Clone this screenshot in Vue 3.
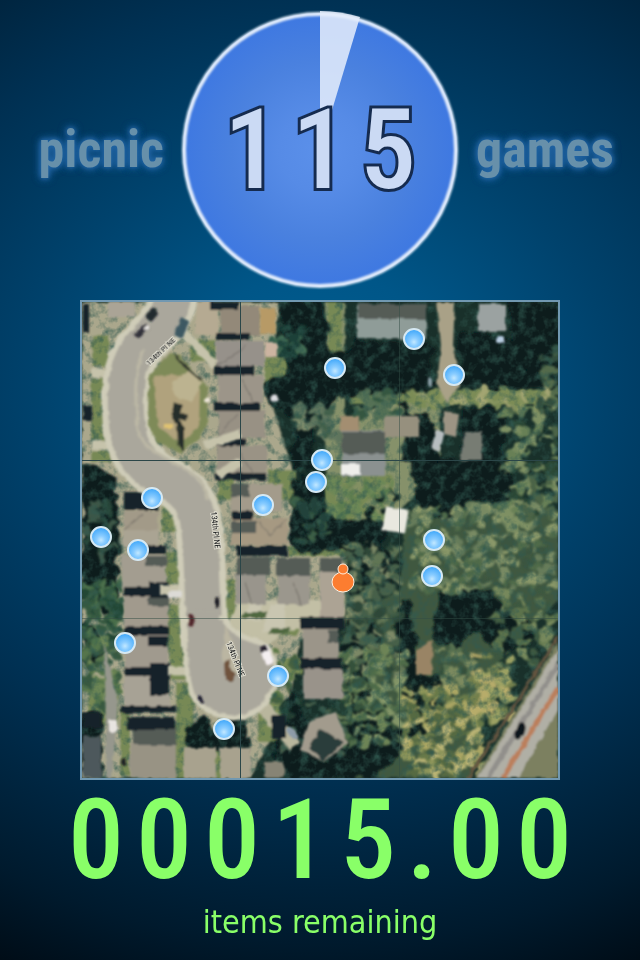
<script setup>
const time = '115'
const score = '00015.00'

const pins = [
  [414, 339], [335, 368], [454, 375], [322, 460], [316, 482], [152, 498], [263, 505],
  [101, 537], [138, 550], [434, 540], [432, 576], [125, 643], [278, 676], [224, 729],
]

// x, y, width, height, roof colour
const houses = [
  [108, 302, 27, 15, '#aaa496'], [195, 302, 23, 33, '#b5aa92'], [220, 306, 40, 29, '#938979'],
  [216, 341, 48, 25, '#96918a'], [218, 375, 45, 29, '#9c9589'], [218, 411, 47, 27, '#989184'],
  [217, 446, 50, 29, '#9a9385'], [231, 484, 51, 28, '#a39b8b'], [231, 518, 57, 27, '#a69982'],
  [124, 511, 34, 20, '#a29a88'], [123, 530, 36, 17, '#aaa493'], [122, 555, 44, 33, '#a39d90'],
  [124, 595, 44, 31, '#a19a8d'], [125, 634, 43, 34, '#a09a8e'], [124, 676, 46, 31, '#a7a295'],
  [130, 744, 46, 34, '#989384'], [83, 736, 18, 42, '#4d595b'],
  [236, 574, 30, 30, '#99958c'], [278, 574, 32, 31, '#9b978d'], [320, 562, 24, 55, '#aca394'],
  [303, 629, 36, 30, '#9b9589'], [303, 669, 40, 30, '#99938a'],
  [184, 748, 32, 30, '#a8a28e'], [220, 748, 31, 30, '#a8a28e'], [264, 762, 20, 16, '#878474'],
  [357, 306, 69, 33, '#8f9c98'], [342, 431, 43, 45, '#8b9190'], [478, 304, 28, 27, '#9ba2a1'],
  [340, 416, 19, 15, '#a38e71'], [384, 416, 35, 22, '#96907e'],
]

// shaded roof planes and the gaps between houses
const shades = [
  [210, 302, 29, 8], [216, 333, 34, 7], [214, 366, 40, 9], [214, 403, 46, 8], [216, 438, 30, 8],
  [214, 473, 52, 7], [232, 511, 20, 9], [236, 546, 52, 10], [124, 492, 34, 18], [130, 546, 36, 8],
  [124, 587, 46, 9], [149, 582, 20, 16], [124, 626, 45, 9], [148, 636, 20, 10], [125, 667, 32, 9],
  [150, 663, 20, 32], [120, 706, 56, 7], [127, 717, 48, 13], [83, 713, 18, 15],
  [83, 304, 6, 29], [83, 406, 9, 14], [300, 617, 45, 12], [300, 658, 42, 11], [272, 715, 14, 24],
]

const darkRoofs = [
  [133, 728, 43, 17], [237, 557, 33, 18], [277, 558, 33, 18], [320, 558, 22, 14],
  [145, 556, 22, 10], [148, 597, 20, 9], [231, 484, 18, 13], [231, 521, 25, 12],
  [342, 432, 43, 22], [328, 630, 11, 13], [358, 304, 68, 15],
]

const lawns = [
  [92, 335, 17, 31], [91, 378, 14, 62], [91, 450, 20, 12], [162, 500, 17, 32], [165, 552, 17, 32],
  [166, 604, 17, 50], [170, 650, 19, 30], [176, 682, 18, 70], [88, 680, 30, 45], [120, 710, 10, 66],
  [165, 724, 20, 54], [190, 340, 26, 22], [264, 356, 23, 30], [218, 470, 16, 30], [222, 580, 14, 40],
  [250, 606, 40, 10], [272, 624, 26, 12], [268, 470, 28, 30], [325, 475, 68, 48], [288, 546, 65, 10],
  [350, 390, 205, 14], [328, 302, 14, 52], [282, 658, 20, 16], [212, 740, 9, 38], [258, 702, 30, 40],
]

const shadows = [
  'M278 302H322L330 352L350 350L358 333L365 343H432V395H340L330 410L315 405L312 475L292 466L297 420L272 405L262 386L290 370Z',
  'M459 333L480 332L520 342L558 350V388H459Z', 'M507 302H558V380L520 370Z',
  'M82 462L116 475L120 550L114 620L82 595Z',
  'M294 478L320 482L325 515L385 523L380 552H298L290 538Z',
  'M370 504L379 496L392 488L400 500L380 545L403 560L390 590L356 610L342 560Z',
  'M411 460L512 460L510 505L470 500L458 522L430 518L415 508Z',
  'M438 592L462 586L490 590L505 612L520 612L533 625L530 645L500 655L478 632L455 648L433 640Z',
  'M400 606L410 600L415 650L428 676L460 670L452 700L432 710L430 735L410 735L402 696L394 640Z',
  'M350 612L378 626L382 650L365 690L390 710L410 745L375 778H300L345 738L342 640Z',
  'M186 728L205 713L220 738L229 718L244 713L250 745L244 756L215 752L185 758Z',
  'M278 722L292 684L310 730L335 778H286L274 755Z',
  'M400 400L412 414L430 416L440 460L405 461Z', 'M462 410L486 405L505 410L502 460H465Z',
  'M82 620L98 630L102 665L85 670Z', 'M82 770L82 713H103V778Z',
]

function makeRandom(seed) {
  let s = seed
  return () => {
    s = (s * 16807) % 2147483647
    return s / 2147483647
  }
}

// x, y, width, height, leaf clumps, palette
const groves = [
  [412, 505, 145, 85, 260, ['#667b5a', '#788a63', '#4f6a4a', '#8a9869', '#3a543f']],
  [505, 395, 52, 130, 100, ['#4b6446', '#688057', '#2b4635', '#7e9064']],
  [496, 590, 55, 75, 60, ['#5c724c', '#3e5840', '#76885b']],
  [345, 545, 55, 130, 120, ['#607454', '#47604a', '#7c8866', '#2d4737']],
  [340, 650, 66, 95, 130, ['#6d8457', '#4f6c49', '#839568', '#35513a']],
  [438, 648, 45, 58, 60, ['#567050', '#7c8a5e', '#35503b']],
  [404, 690, 78, 86, 170, ['#aaa664', '#8d955a', '#bab475', '#68794a', '#566b43']],
  [472, 655, 38, 65, 70, ['#b7ac6b', '#9ba163', '#73804d']],
  [84, 580, 38, 60, 75, ['#345940', '#4b704b', '#244735']],
  [84, 640, 35, 65, 60, ['#55744b', '#6d8655', '#375840']],
  [84, 502, 32, 60, 20, ['#274439', '#3c5747']],
  [272, 325, 28, 30, 25, ['#315a48', '#456e54', '#1c3f37']],
  [296, 408, 42, 30, 34, ['#5e745d', '#42604c', '#7e8c6c']],
  [355, 390, 45, 28, 34, ['#365641', '#547155']],
  [330, 480, 64, 38, 60, ['#6c8757', '#839064', '#5b7b4f']],
  [295, 500, 30, 42, 20, ['#22433a', '#3c5f45']],
  [410, 392, 145, 14, 60, ['#8b9762', '#7b8c57', '#a3a572']],
  [540, 350, 18, 55, 16, ['#324e3c', '#536b4b']],
  [260, 635, 40, 65, 16, ['#44613f', '#5d7949']],
  [280, 700, 65, 60, 24, ['#203d33', '#445d49']],
]

const random = makeRandom(4127)
const leaves = groves.flatMap(([x, y, w, h, n, colours]) =>
  Array.from({ length: n }, () => ({
    x: Math.round(x + random() * w),
    y: Math.round(y + random() * h),
    rx: 3 + Math.round(random() * 4),
    ry: 2 + Math.round(random() * 4),
    fill: colours[Math.floor(random() * colours.length)],
  })),
)

const cars = [
  [142, 331, 16, 7, -40, '#33323b'], [147, 328, 6, 4, -40, '#e9e6e2'], [182, 328, 18, 9, -65, '#3c5962'],
  [152, 315, 12, 8, -50, '#222a2e'], [217, 603, 10, 4, 90, '#15171d'], [191, 620, 13, 5, 90, '#4d2427'],
  [267, 655, 20, 8, 70, '#f4eff1'], [264, 649, 7, 7, 70, '#26232d'], [201, 700, 8, 4, 50, '#17162a'],
  [113, 726, 12, 8, 90, '#e8e4e0'], [124, 762, 8, 5, 90, '#151b20'], [175, 594, 14, 7, 0, '#dcdad6'],
  [438, 440, 20, 9, -75, '#b7bdc0'], [430, 382, 10, 4, 90, '#899da5'], [207, 400, 6, 5, 0, '#ede5d8'],
  [274, 398, 7, 7, 0, '#dedde1'], [292, 733, 14, 5, 45, '#8d9ba8'], [500, 339, 8, 8, 0, '#b8cce0'],
]
</script>

<template>
  <main class="game">
    <header class="top">
      <span class="brand">picnic</span>
      <div class="timer" role="timer">
        <svg class="dial" viewBox="0 0 280 280" aria-hidden="true">
          <defs>
            <radialGradient id="dial-fill">
              <stop offset="0" stop-color="#5b90ea" />
              <stop offset="0.3" stop-color="#568be6" />
              <stop offset="0.65" stop-color="#4a81df" />
              <stop offset="1" stop-color="#3e78e1" />
            </radialGradient>
            <filter id="soft-ring"><feGaussianBlur stdDeviation="1" /></filter>
          </defs>
          <circle cx="140" cy="140" r="137" fill="url(#dial-fill)" />
          <circle cx="140" cy="140" r="136" fill="none" stroke="#e4eefb" stroke-width="4" filter="url(#soft-ring)" />
          <path d="M140 140V1A139 139 0 0 1 180 7Z" fill="#e5eefb" fill-opacity="0.86" />
        </svg>
        <span class="digits time"><span v-for="(c, i) in time" :key="i" class="digit">{{ c }}</span></span>
      </div>
      <span class="brand">games</span>
    </header>

    <section class="map" aria-label="Map">
      <svg class="aerial" viewBox="82 302 476 476" preserveAspectRatio="xMidYMid slice">
        <defs>
          <radialGradient id="pin" cx="0.5" cy="0.65" r="0.6">
            <stop offset="0" stop-color="#c2e8ff" />
            <stop offset="0.35" stop-color="#89ccff" />
            <stop offset="1" stop-color="#43a9fa" />
          </radialGradient>
          <filter id="ragged" x="-5%" y="-5%" width="110%" height="110%">
            <feTurbulence type="fractalNoise" baseFrequency="0.09" numOctaves="2" seed="6" />
            <feDisplacementMap in="SourceGraphic" scale="14" xChannelSelector="R" yChannelSelector="G" />
            <feGaussianBlur stdDeviation="1.2" />
          </filter>
          <filter id="rough" x="-2%" y="-2%" width="104%" height="104%">
            <feTurbulence type="fractalNoise" baseFrequency="0.12" numOctaves="2" seed="3" />
            <feDisplacementMap in="SourceGraphic" scale="4" xChannelSelector="R" yChannelSelector="G" />
            <feGaussianBlur stdDeviation="0.9" />
          </filter>
          <filter id="grain" x="0" y="0" width="100%" height="100%">
            <feTurbulence type="fractalNoise" baseFrequency="0.11" numOctaves="3" seed="9" />
            <feColorMatrix values="0 0 0 0 0.03  0 0 0 0 0.1  0 0 0 0 0.08  1.8 0 0 0 -0.8" />
          </filter>
        </defs>

        <rect x="82" y="302" width="476" height="476" fill="#19302a" />
        <g filter="url(#rough)">
          <path d="M82 302H280L268 390L296 480L292 545L350 556L345 620L300 640L290 700L250 778H82Z" fill="#aaa78c" />
          <path d="M325 302H345V420L395 400H440V470L400 510L330 525L325 440Z" fill="#86916b" />
          <path d="M405 510H558V600L500 660L470 778H350L345 620L400 590Z" fill="#41593f" />
          <rect v-for="(l, i) in lawns" :key="i" :x="l[0]" :y="l[1]" :width="l[2]" :height="l[3]" fill="#778954" />
        </g>

        <g filter="url(#ragged)">
          <path v-for="(d, i) in shadows" :key="i" :d="d" fill="#071a1e" />
        </g>
        <g filter="url(#ragged)">
          <ellipse v-for="(l, i) in leaves" :key="i" :cx="l.x" :cy="l.y" :rx="l.rx" :ry="l.ry" :fill="l.fill" />
        </g>
        <rect x="82" y="302" width="476" height="476" filter="url(#grain)" />

        <g filter="url(#rough)">
          <path d="M437 302H455L453 345L460 385L447 402L437 385L441 345Z" fill="#a9a187" />
          <path d="M444 412L459 414L456 437L444 434Z" fill="#9d9484" />
          <path d="M465 432H482V460H460Z" fill="#777c73" />
          <path d="M104 641L118 702L112 778H106V720Z" fill="#96978d" />
          <path d="M416 650L433 640L432 675H416Z" fill="#998465" />
          <path d="M240 600H345L320 625L285 632L262 650L222 634Z" fill="#c2bfa5" />
          <path d="M262 695L300 742L290 750L256 710Z" fill="#b9b69d" />
          <rect v-for="(h, i) in houses" :key="i" :x="h[0]" :y="h[1]" :width="h[2]" :height="h[3]" :fill="h[4]" />
          <rect v-for="(h, i) in darkRoofs" :key="i" :x="h[0]" :y="h[1]" :width="h[2]" :height="h[3]" fill="#555b56" />
          <rect v-for="(s, i) in shades" :key="i" :x="s[0]" :y="s[1]" :width="s[2]" :height="s[3]" fill="#14242a" />
          <path d="M245 345L240 352L216 366M242 379L254 403M238 414L217 438M240 453L253 474M258 521L270 535L287 519M245 582L252 604M294 582L301 605M142 515L124 530" fill="none" stroke="#6e6b63" />
          <path d="M310 720L336 712L348 743L324 762L300 750Z" fill="#a29b8d" />
          <path d="M320 729L344 742L323 762L309 748Z" fill="#2c3c3b" />
          <path d="M250 604H262V620H242ZM270 604H285V632H262Z" fill="#c9c6b1" />
          <path d="M244 612H266V618H240ZM272 628H292L286 634H268Z" fill="#4f6840" />
        </g>

        <g fill="none" filter="url(#rough)">
          <path d="M181 330L215 365M92 373H112M92 445H116M160 590H190M168 671H195M205 445L240 434M218 475L240 462" stroke="#c6c3ab" stroke-width="9" />
          <path d="M173 296C168 338 128 335 126 390C124 446 134 462 165 480C195 494 199 512 201 550L205 645" stroke="#cfccb8" stroke-width="48" />
          <path d="M173 296C168 338 128 335 126 390C124 446 134 462 165 480C195 494 199 512 201 550L205 645" stroke="#aaa79c" stroke-width="36" />
          <path d="M144 350C132 372 136 405 138 430C145 462 205 462 208 500" stroke="#bbb7a5" stroke-width="3" />
        </g>
        <g filter="url(#rough)">
          <path d="M184 620L223 618Q234 637 262 643Q282 659 274 686Q263 717 233 718Q207 716 193 696Q185 679 184 620Z" fill="#aaa79c" stroke="#cfccb8" stroke-width="5" />
          <rect x="188" y="610" width="31" height="24" fill="#aaa79c" />
          <path d="M225 640Q220 655 226 674H240Q240 652 225 625Z" fill="#bbb6a2" />
          <path d="M224 663L229 660L231 670L237 674L232 682L225 679Z" fill="#70533d" />
          <path d="M149 375L170 354L180 356L208 388L207 425L197 440L181 453L157 443L148 425Z" fill="#7e8a59" />
          <path d="M153 376L190 374L200 384L199 428L180 443L158 426Z" fill="#b0a27d" />
          <path d="M172 382L190 370L202 383L192 402L174 396Z" fill="#bcb390" />
          <path d="M174 402L183 405L180 412L188 414L187 421L180 419L184 430L184 452L177 445L176 424L171 418Z" fill="#252f2a" />
          <path d="M173 353L203 381L198 379L180 364Z" fill="#30362f" />
          <path d="M165 424H173V428H165Z" fill="#dfc372" />
          <rect x="384" y="508" width="23" height="24" fill="#e9e8df" transform="rotate(9 396 520)" />
          <rect x="341" y="463" width="20" height="12" fill="#eeeeea" />
          <path d="M260 308H276V334H260Z" fill="#b79a66" />
          <path d="M265 342H277V357H265Z" fill="#ccb4a1" />
        </g>

        <g filter="url(#rough)">
          <path d="M558 642L475 778H558Z" fill="#7c8060" />
          <path d="M558 649L478 778H518L558 709Z" fill="#b0afa5" />
          <path d="M558 664L488 778" stroke="#918f8b" stroke-width="5" />
          <path d="M558 688L503 778" stroke="#bb7f5c" stroke-width="5" />
          <path d="M558 637L503 724L468 778" fill="none" stroke="#655541" stroke-width="3" />
          <ellipse cx="520" cy="731" rx="5" ry="9" fill="#11151d" transform="rotate(20 520 731)" />
        </g>

        <g filter="url(#rough)">
          <rect
            v-for="(c, i) in cars"
            :key="i"
            :x="c[0] - c[2] / 2"
            :y="c[1] - c[3] / 2"
            :width="c[2]"
            :height="c[3]"
            rx="2"
            :fill="c[5]"
            :transform="`rotate(${c[4]} ${c[0]} ${c[1]})`"
          />
        </g>

        <g class="street">
          <text transform="translate(149 366) rotate(-43)">134th Pl NE</text>
          <text transform="translate(211 512) rotate(84)">134th Pl NE</text>
          <text transform="translate(226 643) rotate(68)">134th Pl NE</text>
        </g>

        <path d="M240.500 302V778M82 460.500H558" stroke="#2b4648" />
        <path d="M399.500 302V778M82 618.500H558" stroke="#314b43" stroke-opacity="0.5" />

        <circle v-for="(p, i) in pins" :key="i" :cx="p[0]" :cy="p[1]" r="10" fill="url(#pin)" stroke="#d6e9f3" stroke-width="2" />
        <g fill="#fc7d30" stroke="#fff0df" stroke-width="1">
          <ellipse cx="343" cy="582" rx="11" ry="10" />
          <circle cx="343" cy="569" r="5" />
        </g>
      </svg>
    </section>

    <footer class="bottom">
      <output class="digits score"><span v-for="(c, i) in score" :key="i" :class="c === '.' ? 'point' : 'digit'">{{ c }}</span></output>
      <p class="caption">items remaining</p>
    </footer>
  </main>
</template>

<style>
body {
  margin: 0;
  background: #00101e;
}
</style>

<style scoped>
.game {
  box-sizing: border-box;
  min-height: 100vh;
  padding: 10px 0 16px;
  display: flex;
  flex-direction: column;
  align-items: center;
  gap: 10px;
  overflow: hidden;
  background: radial-gradient(ellipse 640px 560px at 50% 40%, #005f92 0%, #005688 20%, #00426c 45%, #003052 70%, #001a2d 100%, #000c16 115%);
}

.top {
  box-sizing: border-box;
  width: 100%;
  padding: 0 0;
  display: grid;
  grid-template-columns: 1fr 280px 1fr;
  align-items: center;
}

.brand {
  justify-self: end;
  margin: 0 16px;
  font: bold 52px/60px "Roboto Condensed", Roboto, sans-serif;
  color: #6790aa;
  text-shadow: 0 0 4px #2265a5, 0 0 8px #2265a5, 0 0 8px #2265a5;
}

.timer ~ .brand {
  justify-self: start;
}

.timer {
  display: grid;
  place-items: center;
}

.timer > * {
  grid-area: 1 / 1;
}

.dial {
  display: block;
  width: 100%;
}

.digits {
  display: flex;
  text-align: center;
  font: 500 112px/100px "Roboto Condensed", Roboto, sans-serif;
}

.digit {
  width: 68px;
}

.point {
  width: 40px;
}

.time {
  color: #cbdaf4;
  -webkit-text-stroke: 6px #152b4f;
  paint-order: stroke fill;
}

.map {
  box-sizing: border-box;
  width: 75%;
  border: 2px solid #7198b1;
}

.aerial {
  display: block;
  width: 100%;
}

.street {
  font: 8px "Roboto Condensed", "Liberation Sans", sans-serif;
  fill: #17191b;
  stroke: #dcdacd;
  stroke-width: 2px;
  paint-order: stroke;
}

.bottom {
  display: flex;
  flex-direction: column;
  align-items: center;
  gap: 12px;
  color: #89ff68;
}

.caption {
  margin: 0;
  font: 32px/40px "DejaVu Sans Condensed", "DejaVu Sans", sans-serif;
}
</style>
